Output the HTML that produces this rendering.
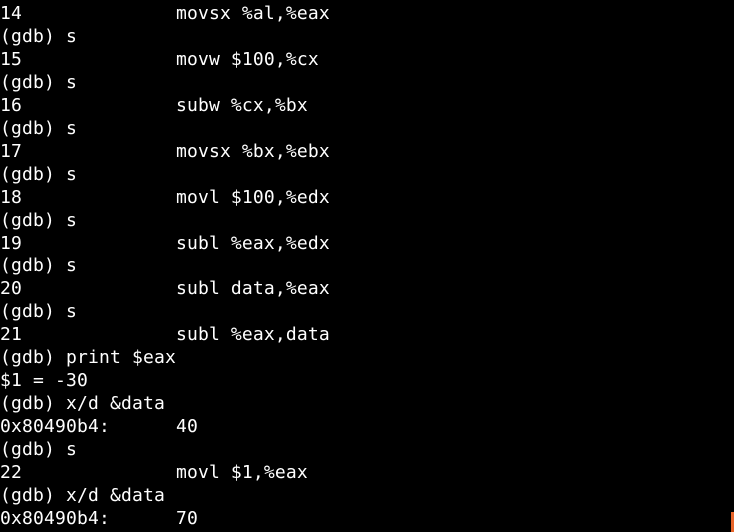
<!DOCTYPE html>
<html><head><style>
html,body{margin:0;padding:0;background:#000;width:734px;height:532px;overflow:hidden}
pre{margin:0;position:absolute;left:0;top:3px;color:#fff;font-family:"DejaVu Sans Mono","Liberation Mono",monospace;font-size:18px;line-height:22.95px;letter-spacing:0.16px;white-space:pre}
.c{position:absolute;left:731px;top:512px;width:3px;height:20px;background:#e8652a}
</style></head><body>
<pre>14              movsx %al,%eax
(gdb) s
15              movw $100,%cx
(gdb) s
16              subw %cx,%bx
(gdb) s
17              movsx %bx,%ebx
(gdb) s
18              movl $100,%edx
(gdb) s
19              subl %eax,%edx
(gdb) s
20              subl data,%eax
(gdb) s
21              subl %eax,data
(gdb) print $eax
$1 = -30
(gdb) x/d &amp;data
0x80490b4:      40
(gdb) s
22              movl $1,%eax
(gdb) x/d &amp;data
0x80490b4:      70</pre>
<div class="c"></div>
</body></html>
